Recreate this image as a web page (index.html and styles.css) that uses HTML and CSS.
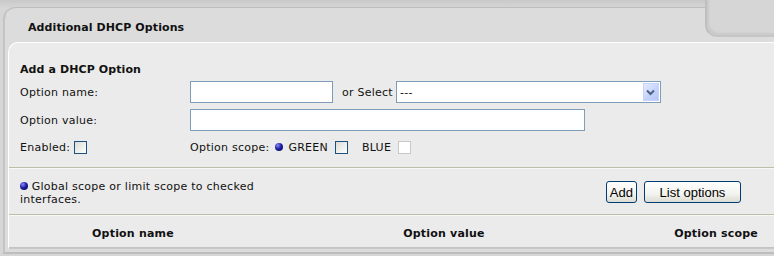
FILE: index.html
```html
<!DOCTYPE html>
<html lang="en">
<head>
  <meta charset="UTF-8" />
  <title>Additional DHCP Options</title>
  <link rel="stylesheet" href="styles.css">
</head>
<body>
  <div class="frame">
    <div class="frame-head">
      <div class="tab-title">Additional DHCP Options</div>
      <div class="tab-rest"></div>
    </div>
    <div class="panel">
      <form class="dhcp-form">
        <div class="form-title">Add a DHCP Option</div>
        <div class="form-row">
          <label class="form-label">Option name:</label>
          <input type="text" class="text-input name-input" />
          <span class="or-select">or Select</span>
          <div class="fake-select">
            <span class="fake-select-value">---</span>
            <span class="fake-select-btn">
              <svg width="9" height="7" viewBox="0 0 9 7"><path d="M1 1.5 L4.5 5 L8 1.5" fill="none" stroke="#4d6185" stroke-width="2"/></svg>
            </span>
          </div>
        </div>
        <div class="form-row">
          <label class="form-label">Option value:</label>
          <input type="text" class="text-input value-input" />
        </div>
        <div class="form-row check-row">
          <div class="form-label">Enabled: <span class="checkbox"></span></div>
          <span class="scope-label">Option scope:</span>
          <span class="bullet"></span>
          <span class="iface">GREEN</span>
          <span class="checkbox"></span>
          <span class="iface blue">BLUE</span>
          <span class="checkbox disabled"></span>
        </div>
      </form>
      <div class="note-row">
        <div class="note"><span class="bullet"></span> Global scope or limit scope to checked<br>interfaces.</div>
        <div class="buttons">
          <button type="button" class="btn">Add</button>
          <button type="button" class="btn btn-wide">List options</button>
        </div>
      </div>
      <div class="list-head">
        <div class="col col-name">Option name</div>
        <div class="col col-value">Option value</div>
        <div class="col col-scope">Option scope</div>
      </div>
    </div>
  </div>
</body>
</html>
```

FILE: styles.css
```css
body {
  margin: 0;
  padding: 0;
  background: linear-gradient(180deg, #c9c9c9 0px, #d6d6d6 8px, #d6d6d6 100%);
  font-family: 'DejaVu Sans', Verdana, sans-serif;
  font-size: 11px;
  letter-spacing: 0.25px;
  color: #111;
  height: 256px;
  overflow: hidden;
}
.frame {
  margin: 7px 0 0 3px;
  background: #dcdcdc;
  border-left: 2px solid #c4c4c4;
  border-top-left-radius: 12px;
  height: 247px;
  box-sizing: border-box;
  border-bottom: 2px solid #bdbdbd;
}
.frame-head {
  display: flex;
  height: 30px;
}
.tab-title {
  width: 712px;
  padding: 13px 0 0 23px;
  box-sizing: border-box;
  font-weight: bold;
  letter-spacing: 0.1px;
  border-top: 1px solid #bdbdbd;
  border-top-left-radius: 11px;
  border-top-right-radius: 12px;
  margin-right: -12px;
}
.tab-rest {
  flex: 1;
  background: #d6d6d6;
  border-left: 2px solid #bfbfbf;
  border-bottom: 2px solid #c6c6c6;
  border-bottom-left-radius: 12px;
  box-shadow: inset 2px -2px 2px #cacaca;
  margin-top: -8px;
  height: 38px;
  box-sizing: border-box;
  position: relative;
  z-index: 1;
}
.panel {
  margin: 5px 0 0 3px;
  background: #ebebeb;
  border-top: 1px solid #fff;
  border-left: 1px solid #fff;
  border-bottom: 1px solid #c8c8c8;
  border-top-left-radius: 10px;
  height: 207px;
  box-sizing: border-box;
}
.dhcp-form {
  padding: 20px 0 0 11px;
  height: 125px;
  box-sizing: border-box;
  border-bottom: 1px solid #bdbdab;
}
.form-title {
  font-weight: bold;
  letter-spacing: 0.1px;
  height: 15px;
}
.form-row {
  display: flex;
  align-items: center;
  height: 22px;
  margin-top: 3px;
}
.form-row + .form-row {
  margin-top: 6px;
}
.form-label {
  width: 170px;
  display: flex;
  align-items: center;
  gap: 4px;
}
.text-input {
  height: 22px;
  box-sizing: border-box;
  border: 1px solid #7f9db9;
  background: #fff;
  margin: 0;
  padding: 0 3px;
  font-family: inherit;
  font-size: 11px;
}
.name-input {
  width: 143px;
}
.value-input {
  width: 395px;
}
.or-select {
  margin: 0 3px 0 9px;
}
.fake-select {
  width: 265px;
  height: 22px;
  box-sizing: border-box;
  border: 1px solid #7f9db9;
  background: #fff;
  display: flex;
  align-items: center;
  padding: 1px;
}
.fake-select-value {
  flex: 1;
  padding-left: 2px;
}
.fake-select-btn {
  width: 16px;
  height: 18px;
  background: linear-gradient(135deg, #e6ecfe 0%, #c2d2fb 60%, #b4c6f6 100%);
  border: 1px solid #c3d3fd;
  box-sizing: border-box;
  display: flex;
  align-items: center;
  justify-content: center;
}
.check-row {
  margin-top: 5px !important;
}
.checkbox {
  display: inline-block;
  width: 13px;
  height: 13px;
  box-sizing: border-box;
  border: 1px solid #1c5180;
  background: linear-gradient(135deg, #dcdcd7 0%, #f4f4f1 70%, #fff 100%);
}
.checkbox.disabled {
  border-color: #c9c9c3;
  background: #fff;
}
.scope-label {
  margin-right: 6px;
}
.bullet {
  display: inline-block;
  width: 8px;
  height: 8px;
  border-radius: 50%;
  background: radial-gradient(circle at 35% 30%, #8a8aff 0%, #2020a0 45%, #000050 100%);
}
.iface {
  margin: 0 7px 0 5px;
}
.iface.blue {
  margin-left: 14px;
}
.note-row {
  display: flex;
  justify-content: space-between;
  height: 47px;
  box-sizing: border-box;
  border-top: 1px solid #f7f7f7;
  border-bottom: 1px solid #bdbdab;
  padding: 11px 33px 0 11px;
}
.note {
  line-height: 13px;
}
.buttons {
  display: flex;
  gap: 7px;
  padding-top: 1px;
  letter-spacing: 0;
}
.btn {
  height: 22px;
  font-family: 'Liberation Sans', Arial, sans-serif;
  font-size: 13px;
  color: #000;
  border: 1px solid #003c74;
  border-radius: 3px;
  background: linear-gradient(180deg, #fff 0%, #f3f3ef 60%, #dcdcd3 100%);
  padding: 0 3px;
  margin: 0;
}
.btn-wide {
  width: 97px;
}
.list-head {
  display: flex;
  font-weight: bold;
  letter-spacing: 0.2px;
  border-top: 1px solid #f7f7f7;
  height: 33px;
  padding-top: 4px;
  align-items: center;
  border-bottom: 1px solid #c3c3c3;
  box-sizing: border-box;
}
.col-name {
  width: 248px;
  text-align: center;
}
.col-value {
  width: 374px;
  text-align: center;
}
.col-scope {
  flex: 1;
  text-align: right;
  padding-right: 16px;
}
```
